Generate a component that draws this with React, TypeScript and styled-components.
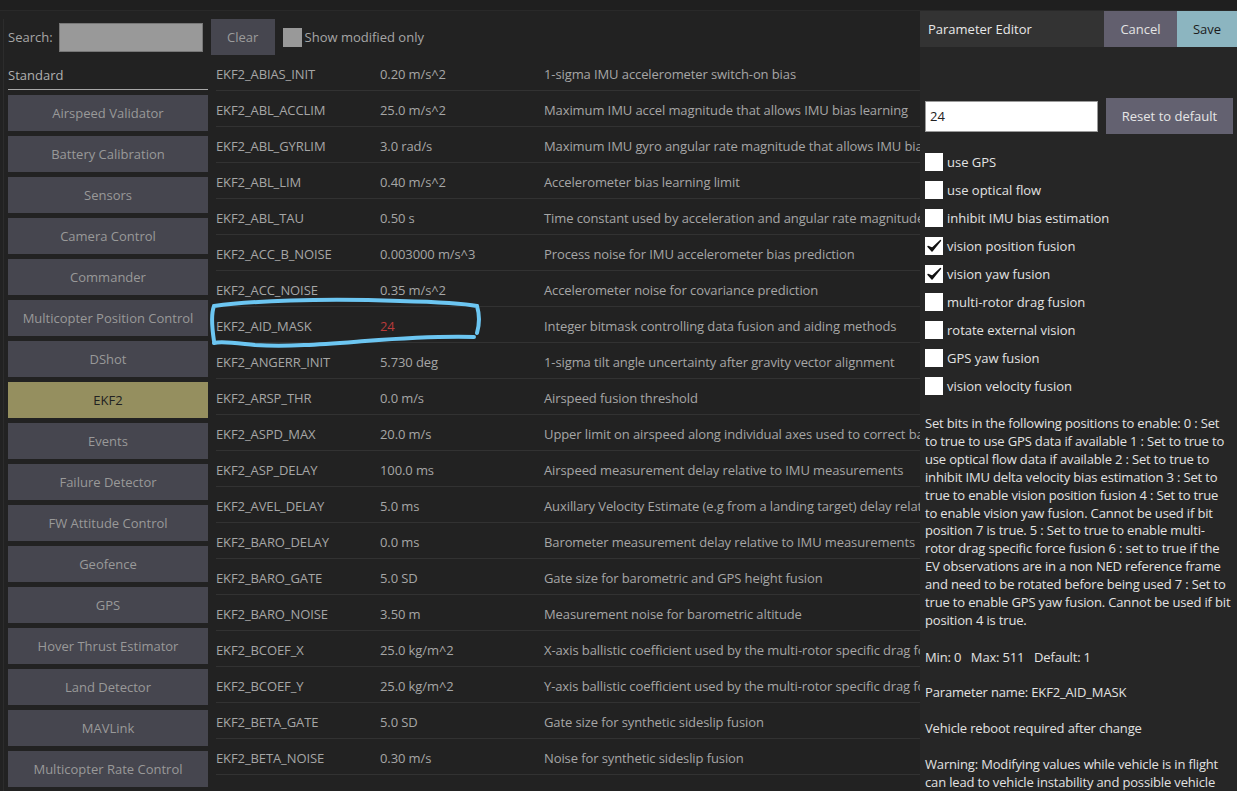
import React from "react";
import styled, { createGlobalStyle, css } from "styled-components";

const Global = createGlobalStyle`
  html, body { margin: 0; padding: 0; background: #222222; }
  body { font-family: "Open Sans", "Noto Sans", sans-serif; }
  * { box-sizing: border-box; }
`;

const Root = styled.div`
  position: relative;
  width: 1237px;
  height: 791px;
  overflow: hidden;
  background: #222222;
  display: flex;
  flex-direction: column;
`;

const TopStrip = styled.div`
  height: 11px;
  flex: none;
  background: #1f1f1f;
  border-bottom: 1px solid #292929;
`;

const Main = styled.div`
  flex: 1;
  display: flex;
  min-height: 0;
`;

const LeftArea = styled.div`
  flex: 1;
  min-width: 0;
  margin-left: 3px;
  padding: 8px 0 0 4px;
  display: flex;
  flex-direction: column;
`;

const Toolbar = styled.div`
  height: 36px;
  flex: none;
  display: flex;
  align-items: center;
  gap: 8px;
  margin-left: -4px;
  padding-left: 4px;
  border-left: 1px solid #2c2c2c;
`;

const Label = styled.span`
  font-size: 13px;
  color: #a6a6a6;
`;

const SearchInput = styled.div`
  width: 144px;
  height: 29px;
  margin-left: -2px;
  background: #999999;
  border: 1px solid #777777;
`;

const DarkButton = styled.div`
  width: 64px;
  height: 36px;
  display: flex;
  align-items: center;
  justify-content: center;
  background: #46464f;
  color: #9c9c9c;
  font-size: 13px;
`;

const CheckRow = styled.div`
  display: flex;
  align-items: center;
  gap: 3px;
`;

const GreyBox = styled.div`
  width: 19px;
  height: 19px;
  background: #999999;
`;

const Content = styled.div`
  flex: 1;
  display: flex;
  gap: 8px;
  min-height: 0;
  margin-left: -4px;
  padding-left: 4px;
  border-left: 1px solid #2c2c2c;
`;

const Sidebar = styled.div`
  width: 200px;
  flex: none;
  display: flex;
  flex-direction: column;
  gap: 5px;
`;

const GroupHeader = styled.div`
  height: 35px;
  flex: none;
  display: flex;
  align-items: center;
  padding-top: 5px;
  font-size: 13px;
  color: #b0b0b0;
  border-bottom: 1px solid #a8a8a8;
`;

const GroupButton = styled.div<{ $selected?: boolean }>`
  height: 36px;
  flex: none;
  display: flex;
  align-items: center;
  justify-content: center;
  font-size: 13px;
  background: #46464f;
  color: #999999;
  ${(p) =>
    p.$selected &&
    css`
      background: #958f5f;
      color: #222222;
    `}
`;

const Table = styled.div`
  flex: 1;
  min-width: 0;
  overflow: hidden;
  display: flex;
  flex-direction: column;
`;

const Row = styled.div`
  height: 36px;
  flex: none;
  display: flex;
  align-items: center;
  border-bottom: 1px solid #323232;
  font-size: 13px;
  color: #a6a6a6;
  white-space: nowrap;
  letter-spacing: -0.1px;
`;

const Cell = styled.div<{ $w?: number; $modified?: boolean }>`
  flex: ${(p) => (p.$w ? `0 0 ${p.$w}px` : "1 0 auto")};
  padding-top: 2px;
  color: ${(p) => (p.$modified ? "#b83a3a" : "inherit")};
`;

const Panel = styled.div`
  width: 317px;
  flex: none;
  background: #262626;
  display: flex;
  flex-direction: column;
  color: #e2e2e2;
  font-size: 13px;
  overflow: hidden;
`;

const PanelHeader = styled.div`
  height: 36px;
  flex: none;
  display: flex;
  background: #333333;
`;

const PanelTitle = styled.div`
  flex: 1;
  display: flex;
  align-items: center;
  padding-left: 8px;
  color: #e8e8e8;
`;

const HeaderButton = styled.div<{ $primary?: boolean }>`
  width: ${(p) => (p.$primary ? 60 : 73)}px;
  display: flex;
  align-items: center;
  justify-content: center;
  background: ${(p) => (p.$primary ? "#8cb5c0" : "#625f6e")};
  color: ${(p) => (p.$primary ? "#1c1c1c" : "#e4e4e4")};
`;

const PanelBody = styled.div`
  flex: none;
  padding: 51px 4px 0 5px;
  display: flex;
  flex-direction: column;
`;

const ValueRow = styled.div`
  flex: none;
  display: flex;
  align-items: center;
  gap: 8px;
`;

const ValueInput = styled.div`
  width: 173px;
  height: 31px;
  flex: none;
  background: #ffffff;
  border: 1px solid #9a9a9a;
  color: #222222;
  display: flex;
  align-items: center;
  padding-left: 4px;
`;

const ResetButton = styled.div`
  width: 127px;
  height: 36px;
  flex: none;
  display: flex;
  align-items: center;
  justify-content: center;
  background: #636170;
  color: #e6e6e6;
`;

const BitList = styled.div`
  margin-top: 14px;
  flex: none;
  display: flex;
  flex-direction: column;
`;

const BitRow = styled.div`
  height: 28px;
  flex: none;
  display: flex;
  align-items: center;
  gap: 4px;
`;

const WhiteBox = styled.div`
  width: 18px;
  height: 18px;
  flex: none;
  background: #ffffff;
  display: flex;
  align-items: center;
  justify-content: center;
`;

const Para = styled.p<{ $top?: number }>`
  flex: none;
  margin: ${(p) => p.$top ?? 18}px 0 0 0;
  line-height: 17.9px;
  letter-spacing: -0.16px;
`;

const Highlight = styled.svg`
  position: absolute;
  left: 0;
  top: 0;
  pointer-events: none;
`;

const groups = [
  "Airspeed Validator",
  "Battery Calibration",
  "Sensors",
  "Camera Control",
  "Commander",
  "Multicopter Position Control",
  "DShot",
  "EKF2",
  "Events",
  "Failure Detector",
  "FW Attitude Control",
  "Geofence",
  "GPS",
  "Hover Thrust Estimator",
  "Land Detector",
  "MAVLink",
  "Multicopter Rate Control",
];

const params: [string, string, string, boolean?][] = [
  ["EKF2_ABIAS_INIT", "0.20 m/s^2", "1-sigma IMU accelerometer switch-on bias"],
  ["EKF2_ABL_ACCLIM", "25.0 m/s^2", "Maximum IMU accel magnitude that allows IMU bias learning"],
  ["EKF2_ABL_GYRLIM", "3.0 rad/s", "Maximum IMU gyro angular rate magnitude that allows IMU bias learning"],
  ["EKF2_ABL_LIM", "0.40 m/s^2", "Accelerometer bias learning limit"],
  ["EKF2_ABL_TAU", "0.50 s", "Time constant used by acceleration and angular rate magnitude filters"],
  ["EKF2_ACC_B_NOISE", "0.003000 m/s^3", "Process noise for IMU accelerometer bias prediction"],
  ["EKF2_ACC_NOISE", "0.35 m/s^2", "Accelerometer noise for covariance prediction"],
  ["EKF2_AID_MASK", "24", "Integer bitmask controlling data fusion and aiding methods", true],
  ["EKF2_ANGERR_INIT", "5.730 deg", "1-sigma tilt angle uncertainty after gravity vector alignment"],
  ["EKF2_ARSP_THR", "0.0 m/s", "Airspeed fusion threshold"],
  ["EKF2_ASPD_MAX", "20.0 m/s", "Upper limit on airspeed along individual axes used to correct baro for position error effects"],
  ["EKF2_ASP_DELAY", "100.0 ms", "Airspeed measurement delay relative to IMU measurements"],
  ["EKF2_AVEL_DELAY", "5.0 ms", "Auxillary Velocity Estimate (e.g from a landing target) delay relative to IMU measurements"],
  ["EKF2_BARO_DELAY", "0.0 ms", "Barometer measurement delay relative to IMU measurements"],
  ["EKF2_BARO_GATE", "5.0 SD", "Gate size for barometric and GPS height fusion"],
  ["EKF2_BARO_NOISE", "3.50 m", "Measurement noise for barometric altitude"],
  ["EKF2_BCOEF_X", "25.0 kg/m^2", "X-axis ballistic coefficient used by the multi-rotor specific drag force model"],
  ["EKF2_BCOEF_Y", "25.0 kg/m^2", "Y-axis ballistic coefficient used by the multi-rotor specific drag force model"],
  ["EKF2_BETA_GATE", "5.0 SD", "Gate size for synthetic sideslip fusion"],
  ["EKF2_BETA_NOISE", "0.30 m/s", "Noise for synthetic sideslip fusion"],
];

const bits: [string, boolean][] = [
  ["use GPS", false],
  ["use optical flow", false],
  ["inhibit IMU bias estimation", false],
  ["vision position fusion", true],
  ["vision yaw fusion", true],
  ["multi-rotor drag fusion", false],
  ["rotate external vision", false],
  ["GPS yaw fusion", false],
  ["vision velocity fusion", false],
];

const Check = () => (
  <svg width="16" height="16" viewBox="0 0 16 16">
    <path d="M2 8.5 L6 13 L14.5 2.5 L6.2 10.2 Z" fill="#111" stroke="#111" strokeWidth="1.4" strokeLinejoin="round" />
  </svg>
);

export default function App() {
  return (
    <Root>
      <Global />
      <TopStrip />
      <Main>
        <LeftArea>
          <Toolbar>
            <Label>Search:</Label>
            <SearchInput />
            <DarkButton>Clear</DarkButton>
            <CheckRow>
              <GreyBox />
              <Label>Show modified only</Label>
            </CheckRow>
          </Toolbar>
          <Content>
            <Sidebar>
              <GroupHeader>Standard</GroupHeader>
              {groups.map((g) => (
                <GroupButton key={g} $selected={g === "EKF2"}>
                  {g}
                </GroupButton>
              ))}
            </Sidebar>
            <Table>
              {params.map(([name, value, desc, mod]) => (
                <Row key={name}>
                  <Cell $w={164}>{name}</Cell>
                  <Cell $w={164} $modified={mod}>
                    {value}
                  </Cell>
                  <Cell>{desc}</Cell>
                </Row>
              ))}
            </Table>
          </Content>
        </LeftArea>
        <Panel>
          <PanelHeader>
            <PanelTitle>Parameter Editor</PanelTitle>
            <HeaderButton>Cancel</HeaderButton>
            <HeaderButton $primary>Save</HeaderButton>
          </PanelHeader>
          <PanelBody>
            <ValueRow>
              <ValueInput>24</ValueInput>
              <ResetButton>Reset to default</ResetButton>
            </ValueRow>
            <BitList>
              {bits.map(([label, on]) => (
                <BitRow key={label}>
                  <WhiteBox>{on && <Check />}</WhiteBox>
                  <span>{label}</span>
                </BitRow>
              ))}
            </BitList>
            <Para $top={15}>
              Set bits in the following positions to enable: 0 : Set to true to use GPS data if available 1 : Set to
              true to use optical flow data if available 2 : Set to true to inhibit IMU delta velocity bias estimation
              3 : Set to true to enable vision position fusion 4 : Set to true to enable vision yaw fusion. Cannot be
              used if bit position 7 is true. 5 : Set to true to enable multi-rotor drag specific force fusion 6 : set
              to true if the EV observations are in a non NED reference frame and need to be rotated before being used
              7 : Set to true to enable GPS yaw fusion. Cannot be used if bit position 4 is true.
            </Para>
            <Para $top={19}>Min: 0&nbsp;&nbsp; Max: 511&nbsp;&nbsp; Default: 1</Para>
            <Para $top={17}>Parameter name: EKF2_AID_MASK</Para>
            <Para>Vehicle reboot required after change</Para>
            <Para>
              Warning: Modifying values while vehicle is in flight can lead to vehicle instability and possible vehicle
              loss. Make sure you know what you are doing and double-check your values before Save!
            </Para>
          </PanelBody>
        </Panel>
      </Main>
      <Highlight width="1237" height="791" viewBox="0 0 1237 791">
        <path
          d="M214 341 C212 328 211 314 214 306 C250 301 320 298 400 301 C440 302 462 303 477 306 C480 316 479 326 477 333"
          fill="none"
          stroke="#6cc6f2"
          strokeWidth="4"
          strokeLinecap="round"
        />
        <path
          d="M474 337 C440 336 405 338 365 341 C325 344 290 347 255 345 C235 343 222 341 214 343"
          fill="none"
          stroke="#6cc6f2"
          strokeWidth="4"
          strokeLinecap="round"
        />
      </Highlight>
    </Root>
  );
}
